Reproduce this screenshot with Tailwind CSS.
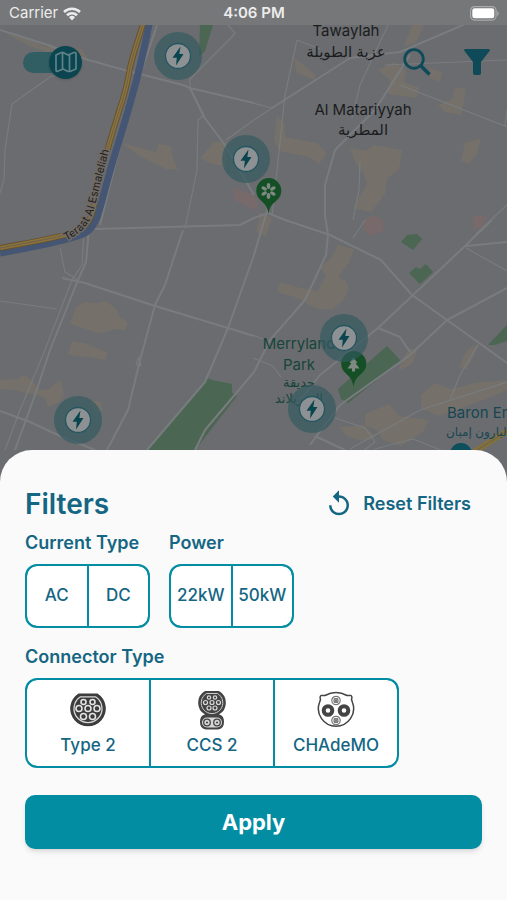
<!DOCTYPE html>
<html lang="en">
<head>
  <meta charset="UTF-8">
  <meta name="viewport" content="width=device-width, initial-scale=1.0">
  <title>Charging Stations - Filters</title>
  <script src="https://cdn.jsdelivr.net/npm/@tailwindcss/browser@4"></script>
</head>
<body class="bg-[#6a6c6f] font-['Inter','DejaVu_Sans',sans-serif]">
<div class="flex flex-col min-h-screen">

  <!-- Map -->
  <section class="relative flex-1 min-h-[482px] overflow-hidden">
    <svg class="absolute inset-0 w-full h-full" viewBox="0 0 507 482" preserveAspectRatio="xMidYMin slice" aria-label="Map">
      <defs>
        <g id="station">
          <circle r="24" fill="#325a62" fill-opacity=".68"/>
          <circle r="12.5" fill="#8e9193" stroke="#235661" stroke-width="1.3"/>
          <path d="M2.500-9.500-5.500 1.800h4.300L-2 9.500 5.500-2H1.300z" fill="#08454f"/>
        </g>
      </defs>
      <rect width="507" height="482" fill="#6a6c6f"/>

      <!-- Built-up areas -->
      <g fill="#75716a">
        <path d="M6 34l18 4 20 8 38 3 6 10-30-3-28-10z"/>
        <path d="M122 143l34 9 3-8 12 2 2 12 5 12-12-1-28-14z"/>
        <path d="M200 158l14-16 12 0 0 24-14-2z"/>
        <path d="M294 57l12 10 10 8-2 5-18-8z"/>
        <path d="M412 25h12l-8 18-12 3z"/>
        <path d="M378 70l16-8 12 8-2 12 16 6-4 10-28-4 2-14z"/>
        <path d="M430 68l12 4-2 10-10-4z"/>
        <path d="M438 105l14-6 3-12 11 2-2 12-3 14-16-3z"/>
        <path d="M277 115l8 10 0 12 32 6 10 10-8 11-10-7-30-6-5-10z"/>
        <path d="M350 148l16 3 8-6 28 5-3 20-12 8-2 16-14 18-18-4 8-14 6-10-4-12-6-6z"/>
        <path d="M465 143l16-5-4 16-8 10-8-3z"/>
        <path d="M76 307l8-5 14 1 8-2 10 8 4 8 8 5-3 8-8-1-12 3-8 1-17-6-10-3z"/>
        <path d="M72 341l16 3 20 9-3 7-16-3-21-2z"/>
        <path d="M0 380l18-1 6-4 8 5 6 9 10 1 12-11 4 14-4 9-12 5-4-10-18-4-12-3-14-1z"/>
        <path d="M90 400l10 2 3 8-6 2-6-8z"/>
        <path d="M338 245l16 4-4 12-12 16 8 4 3 8-6 12-12 9-16-2-20-11-18-5 3-10 20 6 18 3 8-16-6-8 12-10z"/>
        <path d="M463 357l6-9 10-4-6 14-6 11-8-1z"/>
        <path d="M421 395l14-12 16 6 24-6 32-3v10l-18 8-50 18-18-8z"/>
        <path d="M365 414l24-10 10 12 30 4-6 12-22 14-18-6-6-10-12-4z"/>
        <path d="M338 427l26-2 12 12-12 4-16-4z"/>
        <path d="M410 348l7 3-4 12-14 8 2-10z"/>
        <path d="M260 212l12 6-6 18-10-4z"/>
      </g>
      <g fill="#786a6b">
        <path d="M234 188l18 6 6 8-2 8-22-10z"/>
        <path d="M364 220l10-5 10 6-1 10-12 5-8-8z"/>
        <path d="M473 216l14 0-3 10-10 4z"/>
      </g>
      <!-- Parks -->
      <g fill="#4b6652">
        <path d="M200 25h13l-8 26-6 6z"/>
        <path d="M147 450l61-72 4 2 20 4 0 9 5 3-42 54z"/>
        <path d="M338 389l49-43 14 15-53 42-7-4z"/>
        <path d="M401 242l6-7 10-1 5 5-9 11z"/>
        <path d="M409 273l7-6 4 2 6-5 7 8-13 12z"/>
        <path d="M488 345l19-20v16l-12 4z"/>
      </g>

      <!-- Streets -->
      <g fill="none" stroke="#797c7f" stroke-linejoin="round">
        <g stroke-width="1.200">
          <path d="M62 74L50 77 12 104 5 150 4 180 0 193"/>
          <path d="M228 25l7 8-5 6-40 40v9l14 27-6 5-1 50-12 58"/>
          <path d="M60 248l5 24 13 8M0 301l57 8"/>
          <path d="M84 230l-2 35-10 15-27 70-25 60-15 40"/>
          <path d="M226 140l28-20M136 364l3-7 2 9z"/>
          <path d="M320 49l-23-9-12 55-9 85-4 35M253 103l19 5-18 12"/>
          <path d="M388 25l-28 60-8 33M385 65l122-5M400 85l107 42M507 110l-2 16"/>
          <path d="M360 162l-1 28-6 30M507 205l-27 25-15 16"/>
          <path d="M365 220l-12 18M253 335l10 4M253 358l20 8 8 11"/>
          <path d="M350 449l70-39 87-28M335 418l30 10 10 14-12 9M375 449l38-10 30 12"/>
          <path d="M466 248l41 23M450 400l10-25 18-30"/>
        </g>
        <g stroke-width="2">
          <path d="M0 30l48 15 37 14 43 12 55 14 7 3 64 15"/>
          <path d="M157 25l-5 15-12 35-16 55-24 95"/>
          <path d="M190 88l14 29 21 28 29 50"/>
          <path d="M183 230l-18 55-10 20-15 55-12 50-21 40"/>
          <path d="M95 229l145-4 14-7 14-5 17 7 45 15 51 25 31 35 35 25 60 43"/>
          <path d="M62 278l23 5 70 23 73 22 26 8"/>
          <path d="M88 225v15l-2 22-8 18-28 70-15 45-20 55"/>
          <path d="M0 411l30 11 30 14 35 14"/>
          <path d="M276 180l-22 75-26 73-23 54-58 68"/>
          <path d="M272 108l78-50 50-6 70-30"/>
          <path d="M410 55l-35 55-40 40-10 35v30l3 20-2 20-21 45-35 40-16 32-49 58-10 20"/>
          <path d="M492 220l-27 26-53 50-34 32-58 47-20 25"/>
          <path d="M466 246l41-4M447 320l60-32M447 320l-37 35-70 50-30 40M378 328l22 9 10 15M315 436l30 14"/>
        </g>
      </g>

      <!-- Canal and highway -->
      <g fill="none">
        <path d="M149 24c-4 22-10 48-18 76-8 30-18 58-25 86-7 24-9 42-23 48C65 241 28 248 0 253" stroke="#445674" stroke-width="7"/>
        <path d="M143 24c-4 14-13 38-14 50-2 10-4 20-9 34-8 26-22 70-26 98-4 18-10 23-22 27-20 6-46 10-72 15" stroke="#665230" stroke-width="6"/>
        <path d="M143 24c-4 14-13 38-14 50-2 10-4 20-9 34-8 26-22 70-26 98-4 18-10 23-22 27-20 6-46 10-72 15" stroke="#8b7239" stroke-width="4"/>
        <path d="M143 24c-4 14-13 38-14 50-2 10-4 20-9 34-8 26-22 70-26 98-4 18-10 23-22 27-20 6-46 10-72 15" stroke="#686052" stroke-width="1"/>
        <path d="M468 456l39-25" stroke="#83703f" stroke-width="6"/>
        <path d="M468 456l39-25" stroke="#6a604c" stroke-width="1"/>
        <path id="canal" d="M66 241C86 231 91 220 95 206L114 130"/>
      </g>
      <text font-size="11" fill="#251f1c" stroke="#6f6b67" stroke-width="3" paint-order="stroke"><textPath href="#canal">Teraat Al Esmaleliah</textPath></text>

      <!-- Place names -->
      <g fill="#1b1c1e" font-size="15" text-anchor="middle">
        <text x="346" y="36">Tawaylah</text>
        <text x="346" y="57">عزبة الطويلة</text>
        <text x="363" y="115">Al Matariyyah</text>
        <text x="363" y="135">المطرية</text>
      </g>
      <g fill="#17453a" text-anchor="middle">
        <text x="299" y="349" font-size="15">Merryland</text>
        <text x="299" y="370" font-size="15">Park</text>
        <text x="299" y="387" font-size="13">حديقة</text>
        <text x="299" y="403" font-size="13">الميريلاند</text>
      </g>
      <g fill="#174653">
        <text x="447" y="418" font-size="15">Baron Empain</text>
        <text x="446" y="436" font-size="12">البارون إمبان</text>
        <circle cx="461" cy="454" r="11" fill="#0d4f5c"/>
      </g>

      <!-- Park pins -->
      <g fill="#144f25">
        <path d="M268.500 214c-1-8-4-10-8-14a12.500 12.500 0 1 1 16.500 0c-4 4-7.500 6-8.500 14z"/>
        <path d="M353.500 387c-1-8-4-10-8-14a12.500 12.500 0 1 1 16.500 0c-4 4-7.500 6-8.500 14z"/>
      </g>
      <g fill="#7e8a82">
        <g transform="translate(268.500 191)">
          <ellipse cy="-5" rx="1.800" ry="3"/>
          <ellipse cy="-5" rx="1.800" ry="3" transform="rotate(60)"/>
          <ellipse cy="-5" rx="1.800" ry="3" transform="rotate(120)"/>
          <ellipse cy="-5" rx="1.800" ry="3" transform="rotate(180)"/>
          <ellipse cy="-5" rx="1.800" ry="3" transform="rotate(240)"/>
          <ellipse cy="-5" rx="1.800" ry="3" transform="rotate(300)"/>
        </g>
        <path d="M353.500 357.500l4 5.500h-2l4 5.500h-4.500v3h-3v-3h-4.500l4-5.500h-2z"/>
      </g>

      <!-- Charging stations -->
      <use href="#station" x="178" y="56"/>
      <use href="#station" x="246" y="159"/>
      <use href="#station" x="344" y="338"/>
      <use href="#station" x="312" y="409"/>
      <use href="#station" x="78" y="420"/>
    </svg>

    <!-- Status bar -->
    <div class="relative grid grid-cols-3 items-center h-[25px] pt-[2px] pl-[9px] pr-2 bg-[#767779] text-[#ececec] text-[15px]">
      <div class="flex items-center gap-[5px]">
        <span>Carrier</span>
        <svg class="w-[18px] h-[14px]" viewBox="0 0 18 14" fill="none" stroke="currentColor" stroke-width="2.600">
          <path d="M1 5a11.500 11.500 0 0 1 16 0M4 8.300a7.200 7.200 0 0 1 10 0"/>
          <path d="M9 13.500l-3-3.200a4.300 4.300 0 0 1 6 0z" fill="currentColor" stroke="none"/>
        </svg>
      </div>
      <span class="text-center font-semibold">4:06 PM</span>
      <svg class="justify-self-end w-[29px] h-[15px]" viewBox="0 0 29 15">
        <rect x=".6" y=".6" width="25.500" height="13.500" rx="4" fill="none" stroke="#a9aaab" stroke-width="1.200"/>
        <rect x="2.300" y="2.300" width="22" height="10" rx="2.300" fill="#fff"/>
        <path d="M27.300 5v5q1.500-.8 1.500-2.500T27.300 5z" fill="#a9aaab"/>
      </svg>
    </div>

    <!-- Map controls -->
    <div class="relative flex items-center justify-between pt-5 pl-[23px] pr-[17px]">
      <label class="relative flex items-center w-[59px] h-[34px] cursor-pointer">
        <input type="checkbox" checked aria-label="Map view" class="appearance-none w-[46px] h-[21px] rounded-full bg-[#315e62]">
        <span class="absolute right-0 flex items-center justify-center w-[33px] h-[33px] rounded-full bg-[#0a4550] shadow">
          <svg class="w-6 h-6" viewBox="0 0 24 24" fill="none" stroke="#5f8288" stroke-width="1.700" stroke-linejoin="round">
            <path d="M2 5l5.500-2.500Q9 2 10 3l4 2 6-2.500Q22 2 22 4v15l-6 2.500h-2L9 19l-6 2.500Q2 21.500 2 20zM8.500 3v16M15.500 5v16"/>
          </svg>
        </span>
      </label>
      <div class="flex items-center gap-[33px]">
        <button type="button" aria-label="Search">
          <svg class="block w-7 h-7" viewBox="0 0 28 28" fill="none" stroke="#0e4a57">
            <circle cx="11" cy="11" r="9.300" stroke-width="2.800"/>
            <path d="M17.500 17.500l9 9" stroke-width="3.600"/>
          </svg>
        </button>
        <button type="button" aria-label="Filter">
          <svg class="block w-[26px] h-[26px]" viewBox="0 0 26 26" fill="#0e4a57">
            <path d="M1.500 0h23q2 0 1 2L17 13v11q0 2-2 2h-4q-2 0-2-2V13L.5 2q-1-2 1-2z"/>
          </svg>
        </button>
      </div>
    </div>
  </section>

  <!-- Filters sheet -->
  <form class="relative -mt-8 rounded-t-[32px] bg-[#fafafa] pt-9 px-[25px] pb-[51px] text-[#146683]">
    <div class="flex items-center justify-between">
      <h1 class="text-[28px] leading-9 font-semibold">Filters</h1>
      <button type="reset" class="flex items-center gap-[9px] pr-[11px] text-lg leading-6 font-semibold">
        <svg class="w-[30px] h-[30px]" viewBox="0 0 24 24" fill="currentColor">
          <path d="M12 5V1L7 6l5 5V7c3.310 0 6 2.690 6 6s-2.690 6-6 6-6-2.690-6-6H4c0 4.420 3.580 8 8 8s8-3.580 8-8-3.580-8-8-8z"/>
        </svg>
        Reset Filters
      </button>
    </div>

    <div class="flex gap-[19px] mt-[9px]">
      <!-- Current Type -->
      <fieldset class="w-[125px]">
        <legend class="mb-[9px] text-lg leading-6 font-semibold">Current Type</legend>
        <div class="grid grid-cols-2 gap-[2px] h-16 border-2 border-[#038da2] rounded-xl overflow-hidden bg-[#038da2] text-[17px] font-medium">
          <button type="button" class="bg-white rounded-l-[10px]">AC</button>
          <button type="button" class="bg-white rounded-r-[10px]">DC</button>
        </div>
      </fieldset>

      <!-- Power -->
      <fieldset class="w-[125px]">
        <legend class="mb-[9px] text-lg leading-6 font-semibold">Power</legend>
        <div class="grid grid-cols-2 gap-[2px] h-16 border-2 border-[#038da2] rounded-xl overflow-hidden bg-[#038da2] text-[17px] font-medium">
          <button type="button" class="bg-white rounded-l-[10px]">22kW</button>
          <button type="button" class="bg-white rounded-r-[10px]">50kW</button>
        </div>
      </fieldset>
    </div>

    <!-- Connector Type -->
    <fieldset class="mt-[17px] max-w-[374px]">
      <legend class="mb-[9px] text-lg leading-6 font-semibold">Connector Type</legend>
      <div class="grid grid-cols-3 gap-[2px] h-[90px] border-2 border-[#038da2] rounded-xl overflow-hidden bg-[#038da2] text-[17px] leading-6 font-medium">
        <button type="button" class="flex flex-col items-center justify-center gap-[3px] bg-white rounded-l-[10px]">
          <svg class="w-10 h-10" viewBox="0 0 40 40" fill="none">
            <path d="M10.500 3.500h19a17.800 17.800 0 1 1-19 0z" fill="#3c3c3c"/>
            <path d="M12.500 6.800h15a14 14 0 1 1-15 0z" stroke="#d8d8d8" stroke-width="1.300"/>
            <g stroke="#e4e4e4" stroke-width="1.600">
              <circle cx="15.500" cy="12" r="2.500"/><circle cx="24.500" cy="12" r="2.500"/>
              <circle cx="11" cy="18.500" r="3"/><circle cx="20" cy="18.500" r="3"/><circle cx="29" cy="18.500" r="3"/>
              <circle cx="15.500" cy="26.500" r="3"/><circle cx="24.500" cy="26.500" r="3"/>
            </g>
          </svg>
          <span>Type 2</span>
        </button>
        <button type="button" class="flex flex-col items-center justify-center gap-[3px] bg-white">
          <svg class="w-10 h-10" viewBox="0 0 40 40" fill="none">
            <path d="M13 1h14a13.500 13.500 0 0 1 0 23.500q5 .5 5 7.500 0 7-6 7.500H14q-6-.5-6-7.500 0-7 5-7.500A13.500 13.500 0 0 1 13 1z" fill="#444"/>
            <path d="M14.500 3.500h11a10.800 10.800 0 1 1-11 0z" stroke="#ccc"/>
            <g stroke="#d8d8d8" stroke-width="1.200">
              <circle cx="17" cy="7.500" r="1.700"/><circle cx="23" cy="7.500" r="1.700"/>
              <circle cx="13.500" cy="12.500" r="2"/><circle cx="20" cy="12.500" r="2"/><circle cx="26.500" cy="12.500" r="2"/>
              <circle cx="17" cy="18" r="2"/><circle cx="23" cy="18" r="2"/>
            </g>
            <rect x="10" y="27.500" width="20" height="10" rx="5" fill="#d6d6d6"/>
            <g fill="#d6d6d6" stroke="#444" stroke-width="1.300">
              <circle cx="15" cy="32.500" r="3.300"/><circle cx="25" cy="32.500" r="3.300"/>
            </g>
            <path d="M14 32.500h2M24 32.500h2" stroke="#444" stroke-width="1.500"/>
          </svg>
          <span>CCS 2</span>
        </button>
        <button type="button" class="flex flex-col items-center justify-center gap-[3px] bg-white rounded-r-[10px]">
          <svg class="w-10 h-10" viewBox="0 0 40 40" fill="none" stroke="#444">
            <path d="M9 5.500q11-6 22 0l4 0q1.500 1 .5 4l1 3a17.600 17.600 0 1 1-33 0l1-3q-1-3 .5-4z" stroke-width="1.500"/>
            <circle cx="12" cy="20.500" r="4.300" stroke-width="4"/>
            <circle cx="28" cy="20.500" r="4.300" stroke-width="4"/>
            <g stroke="#777" stroke-width="1.200">
              <circle cx="20" cy="10.500" r="4.200"/><circle cx="20" cy="30.500" r="4.200"/>
              <circle cx="20" cy="10.500" r="2"/><circle cx="20" cy="30.500" r="2"/>
              <path d="M18 8.500l4 4M22 8.500l-4 4M18 28.500l4 4M22 28.500l-4 4"/>
            </g>
          </svg>
          <span>CHAdeMO</span>
        </button>
      </div>
    </fieldset>

    <button type="submit" class="block w-full h-[54px] mt-[27px] rounded-[10px] bg-[#038da2] text-white text-[22px] font-bold shadow-md">Apply</button>
  </form>

</div>
</body>
</html>
